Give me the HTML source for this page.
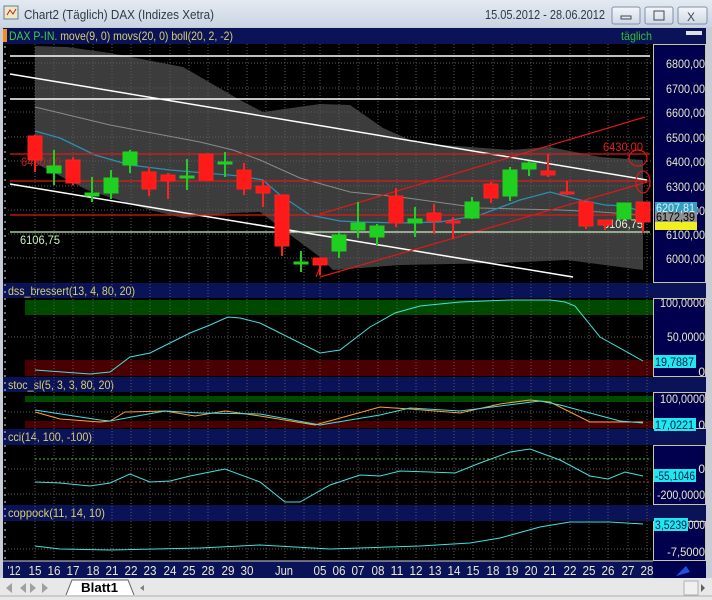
<!DOCTYPE html>
<html><head><meta charset="utf-8"><style>
html,body{margin:0;padding:0;width:712px;height:600px;overflow:hidden;background:#d4d8e0}
svg{display:block;font-family:"Liberation Sans",sans-serif}
</style></head><body>
<svg width="712" height="600" viewBox="0 0 712 600" xmlns="http://www.w3.org/2000/svg">
<defs>
<linearGradient id="tb" x1="0" y1="0" x2="0" y2="1"><stop offset="0" stop-color="#e4eaf2"/><stop offset="1" stop-color="#c9d4e2"/></linearGradient>
<linearGradient id="btn" x1="0" y1="0" x2="0" y2="1"><stop offset="0" stop-color="#f4f6fa"/><stop offset="1" stop-color="#d0d8e4"/></linearGradient>
</defs>
<rect x="0" y="0" width="712" height="28" fill="url(#tb)"/>
<rect x="4" y="6" width="14" height="13" fill="#f0e8c0" stroke="#6080a0"/>
<path d="M7 15 L10 10 L13 14 L16 9" stroke="#c02020" fill="none"/>
<text x="24" y="19" font-size="13" fill="#303a48" textLength="190" lengthAdjust="spacingAndGlyphs">Chart2 (Täglich)  DAX (Indizes Xetra)</text>
<text x="485" y="19" font-size="13" fill="#303a48" textLength="120" lengthAdjust="spacingAndGlyphs">15.05.2012 - 28.06.2012</text>
<rect x="612" y="7" width="28" height="17" rx="2" fill="url(#btn)" stroke="#8090a8"/>
<rect x="621" y="16" width="10" height="3" fill="none" stroke="#404858"/>
<rect x="645" y="7" width="28" height="17" rx="2" fill="url(#btn)" stroke="#8090a8"/>
<rect x="654" y="11" width="10" height="9" fill="none" stroke="#404858"/>
<rect x="678" y="7" width="29" height="17" rx="2" fill="url(#btn)" stroke="#8090a8"/>
<text x="687" y="21" font-size="12" fill="#404858">X</text>
<rect x="0" y="27" width="712" height="553" fill="#c8ccd4"/>
<rect x="3" y="28" width="703" height="551" fill="#000"/>
<rect x="3" y="28" width="703" height="16" fill="#0a1258"/>
<rect x="3" y="29" width="4" height="13" fill="#f09020"/>
<text x="9" y="40" font-size="12" textLength="224" lengthAdjust="spacingAndGlyphs"><tspan fill="#40d040">DAX P-IN.</tspan><tspan fill="#d8d070"> move(9, 0) movs(20, 0) boll(20, 2, -2)</tspan></text>
<text x="621" y="40" font-size="12" fill="#30c030" textLength="31" lengthAdjust="spacingAndGlyphs">täglich</text>
<rect x="686" y="31" width="16" height="4" fill="#e0e0e0"/>
<rect x="3" y="283" width="703" height="15" fill="#0a1258"/>
<text x="8" y="295" font-size="12" fill="#d8d070" textLength="127" lengthAdjust="spacingAndGlyphs">dss_bressert(13, 4, 80, 20)</text>
<rect x="3" y="377" width="703" height="15" fill="#0a1258"/>
<text x="8" y="389" font-size="12" fill="#d8d070" textLength="106" lengthAdjust="spacingAndGlyphs">stoc_sl(5, 3, 3, 80, 20)</text>
<rect x="3" y="429" width="703" height="16" fill="#0a1258"/>
<text x="8" y="441" font-size="12" fill="#d8d070" textLength="84" lengthAdjust="spacingAndGlyphs">cci(14, 100, -100)</text>
<rect x="3" y="505" width="703" height="16" fill="#0a1258"/>
<text x="8" y="517" font-size="12" fill="#d8d070" textLength="97" lengthAdjust="spacingAndGlyphs">coppock(11, 14, 10)</text>
<g fill="#00004e" stroke="#c8c8a0">
<rect x="653.5" y="44.5" width="52" height="238"/>
<rect x="653.5" y="298.5" width="52" height="78"/>
<rect x="653.5" y="392.5" width="52" height="36"/>
<rect x="653.5" y="445.5" width="52" height="59"/>
<rect x="653.5" y="521.5" width="52" height="39"/>
</g>
<rect x="25" y="300" width="628" height="15" fill="#004a00"/>
<rect x="25" y="360" width="628" height="16" fill="#4a0000"/>
<rect x="25" y="396" width="628" height="6" fill="#004a00"/>
<rect x="25" y="421" width="628" height="7" fill="#4a0000"/>
<polygon fill="#3c3c3c" points="35,46 67,47 110,53 183,67 240,100 263,112 320,104 350,105 383,128 417,143 510,150 550,147 600,157 643,160 643,270 567,260 500,263 400,265 333,270 320,257 293,237 260,212 233,213 183,218 150,210 87,190 35,163"/>
<g stroke="#5a5a5a" stroke-dasharray="1,2" stroke-width="1">
<path d="M35 44V560M54 44V560M73 44V560M93 44V560M112 44V560M131 44V560M150 44V560M170 44V560M189 44V560M208 44V560M228 44V560M247 44V560M266 44V560M285 44V560M304 44V560M320 44V560M339 44V560M358 44V560M378 44V560M397 44V560M416 44V560M435 44V560M454 44V560M473 44V560M493 44V560M512 44V560M531 44V560M550 44V560M570 44V560M589 44V560M608 44V560M628 44V560M647 44V560"/>
<path d="M8 63H653M8 88H653M8 112H653M8 137H653M8 161H653M8 186H653M8 210H653M8 234H653M8 258H653M8 337H653M8 412H653M8 469H653M8 494H653M8 549H653"/>
</g>
<g stroke="#ddd" stroke-dasharray="2,5"><path d="M5 46V560"/></g>
<g stroke="#fff" stroke-width="1.5" fill="none">
<path d="M10 56H650M10 99H650M10 74L647 180M10 184L573 277"/>
</g>
<polyline fill="none" stroke="#8a8a8a" points="35,107 110,125 200,142 233,150 260,160 300,178 350,192 400,197 480,208 560,210 600,212 643,215"/>
<polyline fill="none" stroke="#2a8fb0" stroke-width="1.3" points="35,131 60,138 95,155 130,165 170,170 205,173 240,176 263,180 280,195 310,215 340,221 360,222 400,223 440,222 480,215 520,200 550,192 580,200 605,205 625,206 643,212"/>
<g stroke="#e01818" stroke-width="1.2" fill="none">
<path d="M10 154H650M10 181H650M10 215H650M320 277L647 182M320 214L645 117M316 277L322 262"/>
<ellipse cx="638" cy="158" rx="9" ry="8"/>
<ellipse cx="643" cy="182" rx="7" ry="11"/>
</g>
<path d="M10 232H650" stroke="#c8f0c0" stroke-width="1.2"/>
<text x="21" y="166" font-size="12" fill="#c02020" textLength="40" lengthAdjust="spacingAndGlyphs">6430,00</text>
<text x="603" y="151" font-size="12" fill="#e02020" textLength="40" lengthAdjust="spacingAndGlyphs">6430,00</text>
<text x="20" y="244" font-size="12" fill="#c8f0c0" textLength="40" lengthAdjust="spacingAndGlyphs">6106,75</text>
<text x="603" y="228" font-size="12" fill="#e8f0d8" textLength="40" lengthAdjust="spacingAndGlyphs">6106,75</text>
<g stroke="#ff2020" fill="#ff1a1a">
<path d="M35 135V172M73 157V185M149 167V196M168 173V199M206 154V180M244 163V195M263 180V207M282 195V256M320 258V275M396 188V227M434 204V234M453 217V239M491 182V203M548 154V177M567 181V195M586 202V229M605 220V230M643 202V233" stroke-width="2"/>
<rect x="28" y="136" width="14" height="24"/><rect x="66" y="160" width="14" height="23"/><rect x="142" y="172" width="14" height="17"/><rect x="161" y="175" width="14" height="6"/><rect x="199" y="154" width="14" height="26"/><rect x="237" y="170" width="14" height="19"/><rect x="256" y="186" width="14" height="7"/><rect x="275" y="195" width="14" height="51"/><rect x="313" y="258" width="14" height="7"/><rect x="389" y="196" width="14" height="27"/><rect x="427" y="213" width="14" height="8"/><rect x="446" y="221" width="14" height="2"/><rect x="484" y="184" width="14" height="14"/><rect x="541" y="171" width="14" height="4"/><rect x="560" y="192" width="14" height="2"/><rect x="579" y="202" width="14" height="24"/><rect x="598" y="220" width="14" height="5"/><rect x="636" y="202" width="14" height="20"/>
</g>
<g stroke="#20d020" fill="#20d020">
<path d="M54 150V185M92 177V202M111 170V199M130 150V173M187 159V190M225 152V177M301 251V272M339 233V258M358 202V238M377 224V245M415 207V237M472 197V219M510 167V201M529 161V176M624 203V219" stroke-width="2"/>
<rect x="47" y="166" width="14" height="7"/><rect x="85" y="193" width="14" height="3"/><rect x="104" y="178" width="14" height="15"/><rect x="123" y="152" width="14" height="13"/><rect x="180" y="176" width="14" height="2"/><rect x="218" y="162" width="14" height="2"/><rect x="294" y="262" width="14" height="2"/><rect x="332" y="235" width="14" height="16"/><rect x="351" y="223" width="14" height="7"/><rect x="370" y="226" width="14" height="11"/><rect x="408" y="219" width="14" height="4"/><rect x="465" y="202" width="14" height="16"/><rect x="503" y="170" width="14" height="26"/><rect x="522" y="163" width="14" height="6"/><rect x="617" y="203" width="14" height="16"/>
</g>
<polyline fill="none" stroke="#40e0e0" points="35,370 90,374 110,372 130,357 150,353 190,333 210,325 228,317 240,318 260,323 320,353 340,350 370,327 395,313 420,306 460,302 510,300 550,300 565,302 575,306 600,337 643,361"/>
<polyline fill="none" stroke="#ffa030" points="35,412 60,419 100,422 110,421 125,412 165,411 195,416 225,411 260,416 315,425 380,407 410,409 460,413 500,404 530,400 550,402 590,422 643,422"/>
<polyline fill="none" stroke="#40e0e0" points="35,410 100,420 110,421 165,411 200,413 260,414 320,425 380,415 410,408 460,411 540,401 560,405 620,421 643,423"/>
<path d="M35 459H650" stroke="#40c040" stroke-dasharray="2,2"/>
<path d="M35 482H650" stroke="#c03030" stroke-dasharray="2,2"/>
<polyline fill="none" stroke="#40e0e0" points="35,482 60,483 90,486 110,483 130,474 150,482 170,481 190,476 225,469 260,482 285,502 300,502 330,485 360,475 380,476 400,471 430,472 455,473 480,463 510,452 530,449 560,460 590,476 608,479 625,472 643,476"/>
<polyline fill="none" stroke="#40e0e0" points="35,546 60,549 110,550 200,548 260,545 330,549 420,546 470,543 500,538 540,527 570,522 610,522 643,524"/>
<g font-size="12" fill="#e8e8c8" text-anchor="end">
<text x="705" y="68" textLength="39" lengthAdjust="spacingAndGlyphs">6800,00</text><text x="705" y="93" textLength="39" lengthAdjust="spacingAndGlyphs">6700,00</text><text x="705" y="117" textLength="39" lengthAdjust="spacingAndGlyphs">6600,00</text><text x="705" y="142" textLength="39" lengthAdjust="spacingAndGlyphs">6500,00</text><text x="705" y="166" textLength="39" lengthAdjust="spacingAndGlyphs">6400,00</text><text x="705" y="191" textLength="39" lengthAdjust="spacingAndGlyphs">6300,00</text><text x="705" y="215" textLength="39" lengthAdjust="spacingAndGlyphs">6200,00</text><text x="705" y="239" textLength="39" lengthAdjust="spacingAndGlyphs">6100,00</text><text x="705" y="263" textLength="39" lengthAdjust="spacingAndGlyphs">6000,00</text>
<text x="705" y="307" textLength="45" lengthAdjust="spacingAndGlyphs">100,0000</text><text x="705" y="341" textLength="38" lengthAdjust="spacingAndGlyphs">50,0000</text><text x="705" y="376">0</text>
<text x="705" y="403" textLength="45" lengthAdjust="spacingAndGlyphs">100,0000</text><text x="705" y="429">0</text>
<text x="705" y="473">0</text><text x="705" y="499" textLength="48" lengthAdjust="spacingAndGlyphs">-200,0000</text>
<text x="705" y="529" textLength="17" lengthAdjust="spacingAndGlyphs">000</text><text x="705" y="556" textLength="38" lengthAdjust="spacingAndGlyphs">-7,5000</text>
</g>
<rect x="655" y="202" width="42" height="11" fill="#30a0c0"/>
<rect x="655" y="212" width="42" height="11" fill="#909090"/>
<rect x="655" y="222" width="42" height="8" fill="#f0f020"/>
<text x="656" y="212" font-size="12" fill="#e0f0ff" textLength="39" lengthAdjust="spacingAndGlyphs">6207,81</text>
<text x="656" y="221" font-size="12" fill="#000" textLength="39" lengthAdjust="spacingAndGlyphs">6172,39</text>
<rect x="654" y="355" width="42" height="13" fill="#20e8f0"/>
<text x="655" y="366" font-size="12" fill="#002050" textLength="39" lengthAdjust="spacingAndGlyphs">19,7887</text>
<rect x="654" y="418" width="42" height="13" fill="#20e8f0"/>
<text x="655" y="429" font-size="12" fill="#002050" textLength="39" lengthAdjust="spacingAndGlyphs">17,0221</text>
<rect x="654" y="469" width="42" height="13" fill="#20e8f0"/>
<text x="655" y="480" font-size="12" fill="#002050" textLength="40" lengthAdjust="spacingAndGlyphs">-55,1046</text>
<rect x="654" y="518" width="34" height="13" fill="#20e8f0"/>
<text x="655" y="529" font-size="12" fill="#002050" textLength="32" lengthAdjust="spacingAndGlyphs">3,5239</text>
<rect x="3" y="561" width="650" height="17" fill="#0a1258"/>
<rect x="653" y="561" width="53" height="17" fill="#00004e"/>
<path d="M3 561H653" stroke="#d0d0d0"/>
<g font-size="13" fill="#e8e8d0" text-anchor="middle">
<text x="14" y="575" textLength="13" lengthAdjust="spacingAndGlyphs">'12</text><text x="35" y="575" textLength="13" lengthAdjust="spacingAndGlyphs">15</text><text x="54" y="575" textLength="13" lengthAdjust="spacingAndGlyphs">16</text><text x="73" y="575" textLength="13" lengthAdjust="spacingAndGlyphs">17</text><text x="93" y="575" textLength="13" lengthAdjust="spacingAndGlyphs">18</text><text x="112" y="575" textLength="13" lengthAdjust="spacingAndGlyphs">21</text><text x="131" y="575" textLength="13" lengthAdjust="spacingAndGlyphs">22</text><text x="150" y="575" textLength="13" lengthAdjust="spacingAndGlyphs">23</text><text x="170" y="575" textLength="13" lengthAdjust="spacingAndGlyphs">24</text><text x="189" y="575" textLength="13" lengthAdjust="spacingAndGlyphs">25</text><text x="208" y="575" textLength="13" lengthAdjust="spacingAndGlyphs">28</text><text x="228" y="575" textLength="13" lengthAdjust="spacingAndGlyphs">29</text><text x="247" y="575" textLength="13" lengthAdjust="spacingAndGlyphs">30</text><text x="284" y="575" textLength="18" lengthAdjust="spacingAndGlyphs">Jun</text><text x="320" y="575" textLength="13" lengthAdjust="spacingAndGlyphs">05</text><text x="339" y="575" textLength="13" lengthAdjust="spacingAndGlyphs">06</text><text x="358" y="575" textLength="13" lengthAdjust="spacingAndGlyphs">07</text><text x="378" y="575" textLength="13" lengthAdjust="spacingAndGlyphs">08</text><text x="397" y="575" textLength="13" lengthAdjust="spacingAndGlyphs">11</text><text x="416" y="575" textLength="13" lengthAdjust="spacingAndGlyphs">12</text><text x="435" y="575" textLength="13" lengthAdjust="spacingAndGlyphs">13</text><text x="454" y="575" textLength="13" lengthAdjust="spacingAndGlyphs">14</text><text x="473" y="575" textLength="13" lengthAdjust="spacingAndGlyphs">15</text><text x="493" y="575" textLength="13" lengthAdjust="spacingAndGlyphs">18</text><text x="512" y="575" textLength="13" lengthAdjust="spacingAndGlyphs">19</text><text x="531" y="575" textLength="13" lengthAdjust="spacingAndGlyphs">20</text><text x="550" y="575" textLength="13" lengthAdjust="spacingAndGlyphs">21</text><text x="570" y="575" textLength="13" lengthAdjust="spacingAndGlyphs">22</text><text x="589" y="575" textLength="13" lengthAdjust="spacingAndGlyphs">25</text><text x="608" y="575" textLength="13" lengthAdjust="spacingAndGlyphs">26</text><text x="628" y="575" textLength="13" lengthAdjust="spacingAndGlyphs">27</text><text x="647" y="575" textLength="13" lengthAdjust="spacingAndGlyphs">28</text>
</g>
<path d="M676 576L686 566L690 572Z" fill="#2050e0"/>
<rect x="0" y="578" width="712" height="22" fill="#e8e8e8"/>
<path d="M0 596H712" stroke="#b0b0b0"/>
<g fill="#a0a0a0"><path d="M6 588L12 583V593ZM20 588L26 583V593ZM30 583L36 588L30 593ZM42 583L48 588L42 593Z"/></g>
<path d="M66 595L72 580H128L134 595" fill="#fff" stroke="#606060"/>
<text x="81" y="592" font-size="13" font-weight="bold" fill="#000" textLength="37" lengthAdjust="spacingAndGlyphs">Blatt1</text>
<path d="M140 588L144 585V591Z" fill="#808080"/>
<rect x="684" y="581" width="14" height="14" fill="#f0f0f0" stroke="#b0b0b0"/>
<path d="M701 584L705 588L701 592Z" fill="#606060"/>
</svg>
</body></html>
